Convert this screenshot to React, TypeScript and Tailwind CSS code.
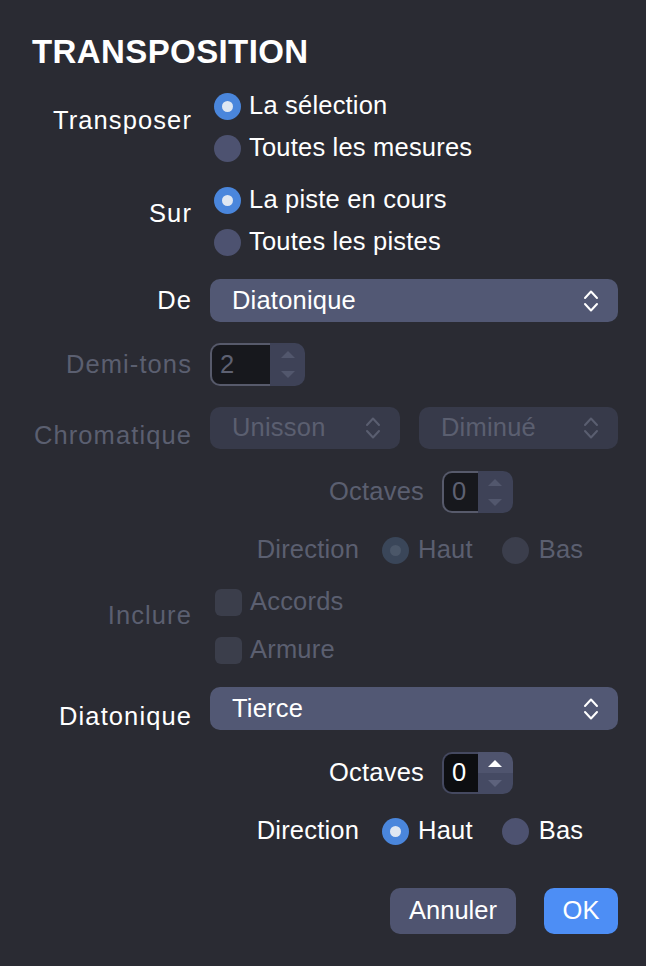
import React from "react";

const F = "font-['Liberation_Sans','Helvetica_Neue',Arial,sans-serif]";

function Chevrons({ disabled }: { disabled?: boolean }) {
  return (
    <svg width="16" height="24" viewBox="0 0 16 24" fill="none" stroke={disabled ? "#5a5e70" : "#ffffff"} strokeWidth="2" strokeLinecap="round" strokeLinejoin="round">
      <polyline points="2,9 8,2.5 14,9" />
      <polyline points="2,15 8,21.5 14,15" />
    </svg>
  );
}

function Select({ label, disabled, className = "", h = "h-[43px]" }: { label: string; disabled?: boolean; className?: string; h?: string }) {
  return (
    <div
      className={`${h} flex items-center justify-between rounded-[10px] pl-[22px] pr-[19px] ${
        disabled ? "bg-[#373a4a] text-[#5b5f70]" : "bg-[#525874] text-white"
      } ${className}`}
    >
      <span>{label}</span>
      <Chevrons disabled={disabled} />
    </div>
  );
}

function Radio({ checked, disabled }: { checked?: boolean; disabled?: boolean }) {
  let bg = "bg-[#4d5270]";
  if (checked) bg = disabled ? "bg-[#3a4659]" : "bg-[#4a86dc]";
  else if (disabled) bg = "bg-[#3b3e4c]";
  return (
    <div className={`w-[27px] h-[27px] rounded-full flex items-center justify-center shrink-0 ${bg}`}>
      {checked && <div className={`w-[11px] h-[11px] rounded-full ${disabled ? "bg-[#4b5769]" : "bg-[#dfe7f2]"}`} />}
    </div>
  );
}

function RadioRow({ label, checked, disabled }: { label: string; checked?: boolean; disabled?: boolean }) {
  return (
    <div className={`h-[42px] flex items-center gap-[8px] pl-[4px] ${disabled ? "text-[#5b5f70]" : "text-white"}`}>
      <Radio checked={checked} disabled={disabled} />
      <span>{label}</span>
    </div>
  );
}

function CheckRow({ label }: { label: string }) {
  return (
    <div className="h-[48px] flex items-center gap-[8px] pl-[5px] text-[#5b5f70]">
      <div className="w-[27px] h-[27px] rounded-[6px] bg-[#3b3e4b]" />
      <span>{label}</span>
    </div>
  );
}

function Tri({ up, color }: { up?: boolean; color: string }) {
  return (
    <svg width="16" height="8" viewBox="0 0 16 8">
      <polygon points={up ? "1,8 8,1 15,8" : "1,0 8,7 15,0"} fill={color} />
    </svg>
  );
}

function Stepper({ value, inputW, disabled, h }: { value: string; inputW: string; disabled?: boolean; h: string }) {
  return (
    <div className={`flex ${h}`}>
      <div
        className={`${inputW} flex items-center pl-[8px] rounded-l-[10px] border-2 border-r-0 ${
          disabled ? "bg-[#17181d] border-[#575a6b] text-[#5e6172]" : "bg-[#0d0e11] border-[#454960] text-white"
        }`}
      >
        {value}
      </div>
      <div className="w-[35px] flex flex-col rounded-r-[10px] overflow-hidden">
        <div className={`flex-1 flex items-center justify-center ${disabled ? "bg-[#3e4257]" : "bg-[#4f546e]"}`}>
          <Tri up color={disabled ? "#52576d" : "#ffffff"} />
        </div>
        <div className={`flex-1 flex items-center justify-center ${disabled ? "bg-[#3e4257]" : "bg-[#454a63]"}`}>
          <Tri color={disabled ? "#52576d" : "#5d627c"} />
        </div>
      </div>
    </div>
  );
}

function Row({ label, labelClass = "", disabled, className = "", children }: { label?: string; labelClass?: string; disabled?: boolean; className?: string; children: React.ReactNode }) {
  return (
    <div className={`flex ${className}`}>
      <div className={`w-[192px] shrink-0 text-right whitespace-nowrap tracking-[1.1px] -mr-[1px] ${disabled ? "text-[#5b5f70]" : "text-white"} ${labelClass}`}>{label}</div>
      <div className="w-[408px] ml-[19px] tracking-[0.2px]">{children}</div>
    </div>
  );
}

function OctDir({ disabled }: { disabled?: boolean }) {
  const txt = disabled ? "text-[#5b5f70]" : "text-white";
  return (
    <>
      <Row className="mt-[22px] h-[42px]">
        <div className={`h-[42px] flex items-center justify-center pl-[14px] ${txt}`}>
          <span className="mr-[18px]">Octaves</span>
          <Stepper value="0" inputW="w-[36px]" h="h-[42px]" disabled={disabled} />
        </div>
      </Row>
      <Row className="mt-[16px] h-[42px]">
        <div className={`h-[42px] flex items-center justify-center pl-[12px] ${txt}`}>
          <span className="mr-[23px]">Direction</span>
          <Radio checked disabled={disabled} />
          <span className="ml-[9px] mr-[29px]">Haut</span>
          <Radio disabled={disabled} />
          <span className="ml-[10px]">Bas</span>
        </div>
      </Row>
    </>
  );
}

export default function App() {
  return (
    <div className={`w-[646px] h-[966px] bg-[#2a2b33] text-white ${F} text-[25.5px] leading-none overflow-hidden`}>
      <div className="pl-[32px] pt-[32px] h-[72px] text-[33px] font-bold leading-[40px] tracking-[0.4px]">TRANSPOSITION</div>

      <Row label="Transposer" labelClass="pt-[14px] leading-[42px]" className="mt-[13px]">
        <RadioRow label="La sélection" checked />
        <RadioRow label="Toutes les mesures" />
      </Row>

      <Row label="Sur" labelClass="pt-[13px] leading-[42px]" className="mt-[10px]">
        <RadioRow label="La piste en cours" checked />
        <RadioRow label="Toutes les pistes" />
      </Row>

      <Row label="De" labelClass="leading-[43px]" className="mt-[16px] h-[43px]">
        <Select label="Diatonique" />
      </Row>

      <Row label="Demi-tons" disabled labelClass="leading-[43px]" className="mt-[21px] h-[43px]">
        <Stepper value="2" inputW="w-[60px]" h="h-[43px]" disabled />
      </Row>

      <Row label="Chromatique" disabled labelClass="pt-[7px] leading-[42px]" className="mt-[21px] h-[42px]">
        <div className="flex gap-[19px]">
          <Select label="Unisson" disabled h="h-[42px]" className="w-[190px]" />
          <Select label="Diminué" disabled h="h-[42px]" className="flex-1" />
        </div>
      </Row>

      <OctDir disabled />

      <Row label="Inclure" disabled labelClass="pt-[16px] leading-[42px]" className="mt-[7px]">
        <CheckRow label="Accords" />
        <CheckRow label="Armure" />
      </Row>

      <Row label="Diatonique" labelClass="pt-[8px] leading-[43px]" className="mt-[13px] h-[43px]">
        <Select label="Tierce" />
      </Row>

      <OctDir />

      <div className="mt-[36px] flex justify-end pr-[28px] gap-[28px]">
        <button className="h-[46px] w-[126px] rounded-[10px] bg-[#4f5470] text-white">Annuler</button>
        <button className="h-[46px] w-[74px] rounded-[10px] bg-[#4d8ef5] text-white">OK</button>
      </div>
    </div>
  );
}
